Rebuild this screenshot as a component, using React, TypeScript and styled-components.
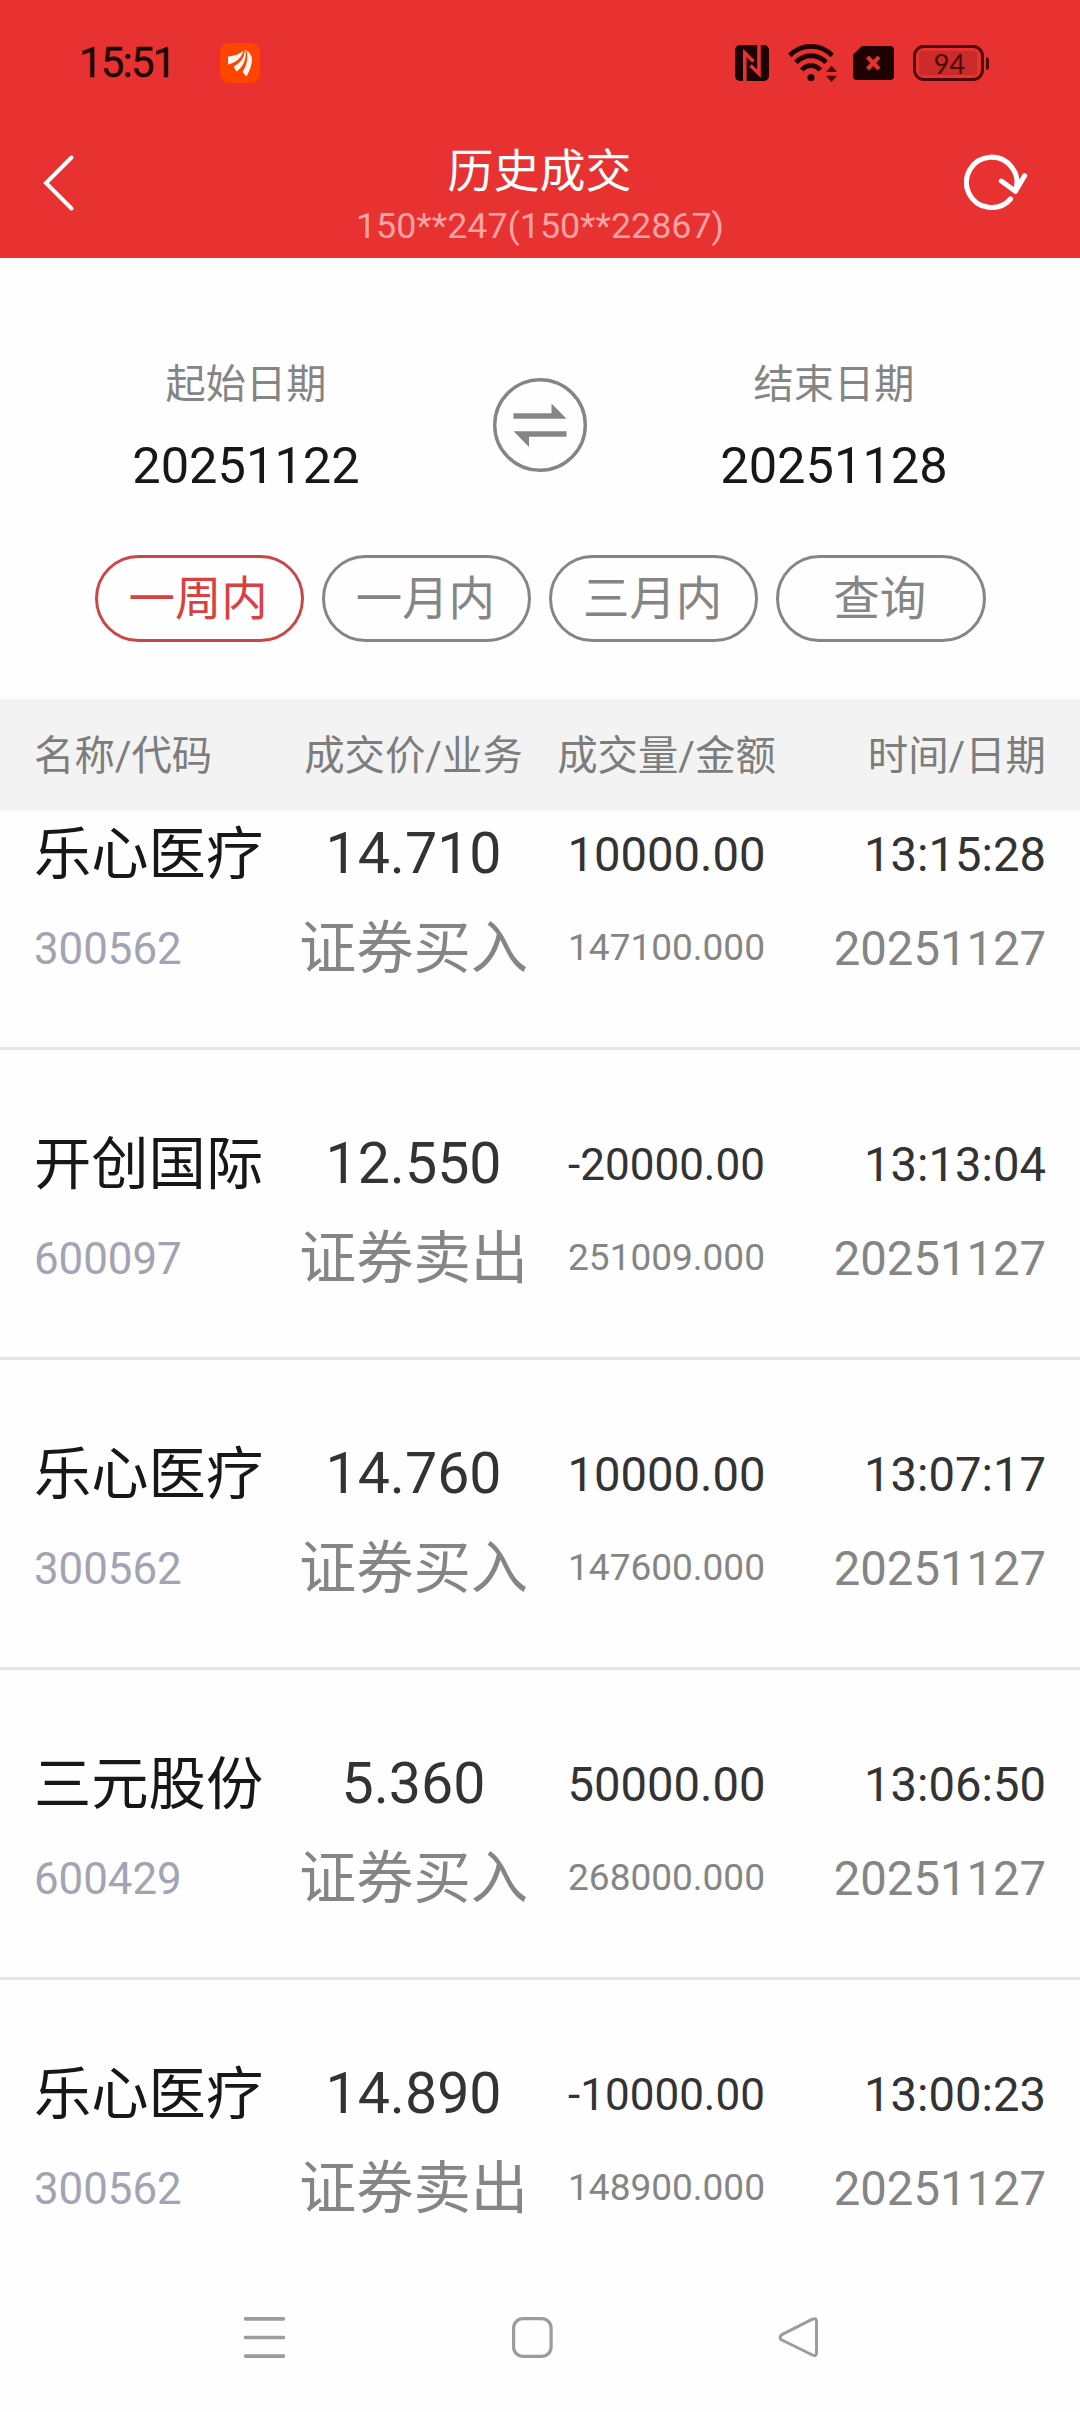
import React from "react";
import styled, { createGlobalStyle } from "styled-components";

const GlobalStyle = createGlobalStyle`
  *, *::before, *::after { box-sizing: border-box; }
  html, body { margin: 0; padding: 0; background: #fff; }
  body { font-family: Roboto, "Noto Sans CJK SC", sans-serif; }
`;

const Screen = styled.div`
  width: 1080px;
  height: 2412px;
  display: flex;
  flex-direction: column;
  overflow: hidden;
  background: #fefefe;
`;

const Header = styled.header`
  flex: none;
  height: 258px;
  display: flex;
  flex-direction: column;
  background: #e83131;
`;

const StatusBar = styled.div`
  height: 125px;
  padding: 0 96px 0 79px;
  display: flex;
  align-items: center;
  justify-content: space-between;
  color: #1c0202;
`;

const StatusGroup = styled.div`
  display: flex;
  align-items: center;
`;

const Clock = styled.span`
  width: 141px;
  padding-top: 1px;
  font-size: 42px;
  line-height: 50px;
  letter-spacing: -1.8px;
  -webkit-text-stroke: 0.3px currentColor;
`;

const Battery = styled.div`
  position: relative;
  width: 71px;
  height: 36px;
  margin-left: 19px;
  padding: 3px;
  border: 3px solid #4a0808;
  border-radius: 11px;
  display: flex;
  &::after {
    content: "";
    position: absolute;
    right: -8px;
    top: 9px;
    width: 3px;
    height: 13px;
    border-radius: 0 3px 3px 0;
    background: #4a0808;
  }
`;

const BatteryLevel = styled.div`
  width: 58px;
  padding-left: 3px;
  border-radius: 3px;
  background: #cb2b2b;
  color: #4a0808;
  font-family: Lato, sans-serif;
  font-size: 27px;
  line-height: 25px;
  text-align: center;
`;

const TitleBar = styled.div`
  flex: 1;
  padding: 0 52px 0 40px;
  display: grid;
  grid-template-columns: 75px 1fr 64px;
`;

const IconSlot = styled.div<{ $end?: boolean }>`
  height: 115px;
  display: flex;
  align-items: center;
  justify-content: ${(p) => (p.$end ? "flex-end" : "flex-start")};
`;

const TitleBlock = styled.div`
  display: flex;
  flex-direction: column;
  align-items: center;
`;

const Title = styled.h1`
  margin: 17px 0 0;
  font-size: 46px;
  font-weight: 400;
  line-height: 58px;
  color: #fff;
`;

const Account = styled.div`
  margin: 2px 0 0 1px;
  font-size: 35.8px;
  line-height: 48px;
  color: #fda3a3;
`;

const Filters = styled.section`
  flex: none;
  height: 441px;
  padding: 96px 94.500px 0 94.500px;
`;

const DateRow = styled.div`
  height: 201px;
  display: grid;
  grid-template-columns: 303px 285px 303px;
  justify-items: center;
`;

const DateField = styled.div`
  text-align: center;
`;

const DateLabel = styled.div`
  font-size: 40.2px;
  line-height: 61px;
  color: #858585;
`;

const DateValue = styled.div`
  margin-top: 21px;
  font-size: 50.6px;
  line-height: 60px;
  color: #171717;
`;

const SwapButton = styled.button`
  margin: 24px 0 0;
  padding: 0;
  width: 94px;
  height: 94px;
  border: 0;
  background: none;
`;

const RangeRow = styled.div`
  display: grid;
  grid-template-columns: repeat(4, 1fr);
  column-gap: 18px;
`;

const RangeButton = styled.button<{ $active?: boolean }>`
  height: 87px;
  padding: 0 2px 0 0;
  border: 3px solid ${(p) => (p.$active ? "#c94747" : "#858585")};
  border-radius: 44px;
  background: none;
  font: 400 46.4px/80px Roboto, "Noto Sans CJK SC", sans-serif;
  color: ${(p) => (p.$active ? "#da4040" : "#858585")};
`;

const Columns = styled.div`
  display: grid;
  grid-template-columns: repeat(4, 253px);
  padding: 0 34px;
`;

const TableHead = styled(Columns)`
  flex: none;
  height: 112px;
  background: #f3f3f3;
  color: #7d7d7d;
  font-size: 40.4px;
  line-height: 115px;
`;

type Align = "left" | "center" | "right";

const Cell = styled.div<{ $align: Align }>`
  text-align: ${(p) => p.$align};
  white-space: nowrap;
`;

const TradeList = styled.main`
  flex: 1;
  min-height: 0;
  display: flex;
  flex-direction: column;
  justify-content: flex-end;
  overflow: hidden;
`;

const Trade = styled(Columns)`
  flex: none;
  height: 310px;
  padding-top: 73px;
  border-bottom: 3px solid #e5e5e5;
  &:last-child { border-bottom: 0; }
`;

const Line = styled.div<{ $size: number; $color: string; $drop?: number }>`
  height: 94px;
  padding-top: ${(p) => p.$drop ?? 0}px;
  font-size: ${(p) => p.$size}px;
  line-height: 80px;
  color: ${(p) => p.$color};
`;

const NavBar = styled.nav`
  flex: none;
  height: 122px;
  padding: 26px 260px 0 243px;
  display: flex;
  align-items: flex-start;
  justify-content: space-between;
`;

const Logo = () => (
  <svg width="40" height="40" viewBox="0 0 40 40">
    <rect width="40" height="40" rx="9" fill="#ff4400" />
    <g fill="#fff8f0">
      <path d="M8 13.5C14 13 20 11 23.5 7.5C22 14 16 20 8 21.5Z" />
      <path d="M24.8 7C24.5 15 20 20 14 23.5C14.500 25.500 15.500 27.500 16.500 28.500C22 25 27 17 25.500 7Z" />
      <path d="M26.500 7.200C29 17 25 25 22.500 29L26.500 33.500C29.500 28 32 22 32 16C31.500 12 29 9 26.500 7.200Z" />
    </g>
  </svg>
);

const Nfc = () => (
  <svg width="34" height="36" viewBox="0 0 34 36">
    <rect width="34" height="36" rx="5" fill="#1c0202" />
    <path d="M9.800 37V8L18.500 16.500M15.500 20.500L24 28.500V-1" fill="none" stroke="#e83131" strokeWidth="3.600" />
  </svg>
);

const WifiSvg = styled.svg`
  margin: 0 15px 0 19px;
`;

const Wifi = () => (
  <WifiSvg width="50" height="40" viewBox="0 0 50 40">
    <g fill="none" stroke="#1c0202" strokeWidth="4.800">
      <path d="M1.800 12.500A29 29 0 0 1 44.200 12.500" />
      <path d="M8 19.500A20 20 0 0 1 38 19.500" />
      <path d="M13.800 27A12 12 0 0 1 32.200 27" />
    </g>
    <circle cx="23" cy="34.500" r="3.600" fill="#1c0202" />
    <path d="M43.500 22.500L49 29H38ZM43.500 39L49 32.800H38Z" fill="#4a0808" />
  </WifiSvg>
);

const Sim = () => (
  <svg width="41" height="34" viewBox="0 0 41 34">
    <path d="M9 0H37Q41 0 41 4V30Q41 34 37 34H4Q0 34 0 30V8.500Z" fill="#1c0202" />
    <path d="M14.500 11L26 23M26 11L14.500 23" stroke="#e83131" strokeWidth="4" />
  </svg>
);

const Back = () => (
  <svg width="36" height="60" viewBox="0 0 36 60">
    <path d="M31.500 4.500L6 30L31.500 55.500" fill="none" stroke="#fff" strokeWidth="4" strokeLinecap="round" />
  </svg>
);

const Refresh = () => (
  <svg width="66" height="60" viewBox="0 0 66 60">
    <g fill="none" stroke="#fff" strokeWidth="5.200" strokeLinecap="round" strokeLinejoin="round">
      <path d="M48 46.500A26 26 0 1 1 53 38" />
      <path d="M38.500 28L53 38.500L62.500 22.500" />
    </g>
  </svg>
);

const Swap = () => (
  <svg width="94" height="94" viewBox="0 0 94 94">
    <circle cx="47" cy="47" r="45.300" fill="none" stroke="#858585" strokeWidth="3.400" />
    <path d="M20.500 35.300H58.500V25.500L73.500 40.800H20.500ZM73.500 58.800H36V69L20.500 53.300H73.500Z" fill="#858585" />
  </svg>
);

const MenuIcon = () => (
  <svg width="42" height="42" viewBox="0 0 42 42">
    <path d="M2.500 2.900H40.500M2.500 21.500H40.500M2.500 40.100H40.500" stroke="#9c9c9c" strokeWidth="3.600" strokeLinecap="round" />
  </svg>
);

const HomeIcon = () => (
  <svg width="42" height="42" viewBox="0 0 42 42">
    <rect x="2.600" y="2.600" width="37.500" height="37.800" rx="9.500" fill="none" stroke="#9c9c9c" strokeWidth="3.200" />
  </svg>
);

const BackTriangle = () => (
  <svg width="42" height="42" viewBox="0 0 42 42">
    <path d="M34.500 3.200Q38.500 1.400 38.500 5.500V37Q38.500 41 34.500 39L3.800 24Q0.400 21.500 3.800 18.600Z" fill="none" stroke="#9c9c9c" strokeWidth="3" strokeLinejoin="round" />
  </svg>
);

const ranges = ["一周内", "一月内", "三月内", "查询"];

const trades = [
  { name: "乐心医疗", code: "300562", price: "14.710", kind: "证券买入", qty: "10000.00", amount: "147100.000", time: "13:15:28", date: "20251127" },
  { name: "开创国际", code: "600097", price: "12.550", kind: "证券卖出", qty: "-20000.00", amount: "251009.000", time: "13:13:04", date: "20251127" },
  { name: "乐心医疗", code: "300562", price: "14.760", kind: "证券买入", qty: "10000.00", amount: "147600.000", time: "13:07:17", date: "20251127" },
  { name: "三元股份", code: "600429", price: "5.360", kind: "证券买入", qty: "50000.00", amount: "268000.000", time: "13:06:50", date: "20251127" },
  { name: "乐心医疗", code: "300562", price: "14.890", kind: "证券卖出", qty: "-10000.00", amount: "148900.000", time: "13:00:23", date: "20251127" },
];

const qtySize = (qty: string) => (qty.length > 8 ? 44 : 47.2);

export default function App() {
  return (
    <>
      <GlobalStyle />
      <Screen>
        <Header>
          <StatusBar>
            <StatusGroup>
              <Clock>15:51</Clock>
              <Logo />
            </StatusGroup>
            <StatusGroup>
              <Nfc />
              <Wifi />
              <Sim />
              <Battery>
                <BatteryLevel>94</BatteryLevel>
              </Battery>
            </StatusGroup>
          </StatusBar>
          <TitleBar>
            <IconSlot><Back /></IconSlot>
            <TitleBlock>
              <Title>历史成交</Title>
              <Account>150**247(150**22867)</Account>
            </TitleBlock>
            <IconSlot $end><Refresh /></IconSlot>
          </TitleBar>
        </Header>
        <Filters>
          <DateRow>
            <DateField>
              <DateLabel>起始日期</DateLabel>
              <DateValue>20251122</DateValue>
            </DateField>
            <SwapButton><Swap /></SwapButton>
            <DateField>
              <DateLabel>结束日期</DateLabel>
              <DateValue>20251128</DateValue>
            </DateField>
          </DateRow>
          <RangeRow>
            {ranges.map((label, i) => (
              <RangeButton key={label} $active={i === 0}>{label}</RangeButton>
            ))}
          </RangeRow>
        </Filters>
        <TableHead>
          <Cell $align="left">名称/代码</Cell>
          <Cell $align="center">成交价/业务</Cell>
          <Cell $align="center">成交量/金额</Cell>
          <Cell $align="right">时间/日期</Cell>
        </TableHead>
        <TradeList>
          {trades.map((t) => (
            <Trade key={t.time}>
              <Cell $align="left">
                <Line $size={57.3} $color="#171717" $drop={2}>{t.name}</Line>
                <Line $size={43.800} $color="#a3a3b3" $drop={2}>{t.code}</Line>
              </Cell>
              <Cell $align="center">
                <Line $size={57.3} $color="#333" $drop={1}>{t.price}</Line>
                <Line $size={57.3} $color="#858585" $drop={2}>{t.kind}</Line>
              </Cell>
              <Cell $align="center">
                <Line $size={qtySize(t.qty)} $color="#333" $drop={2}>{t.qty}</Line>
                <Line $size={37} $color="#858585" $drop={1}>{t.amount}</Line>
              </Cell>
              <Cell $align="right">
                <Line $size={47.2} $color="#333" $drop={2}>{t.time}</Line>
                <Line $size={47.2} $color="#858585" $drop={2}>{t.date}</Line>
              </Cell>
            </Trade>
          ))}
        </TradeList>
        <NavBar>
          <MenuIcon />
          <HomeIcon />
          <BackTriangle />
        </NavBar>
      </Screen>
    </>
  );
}
